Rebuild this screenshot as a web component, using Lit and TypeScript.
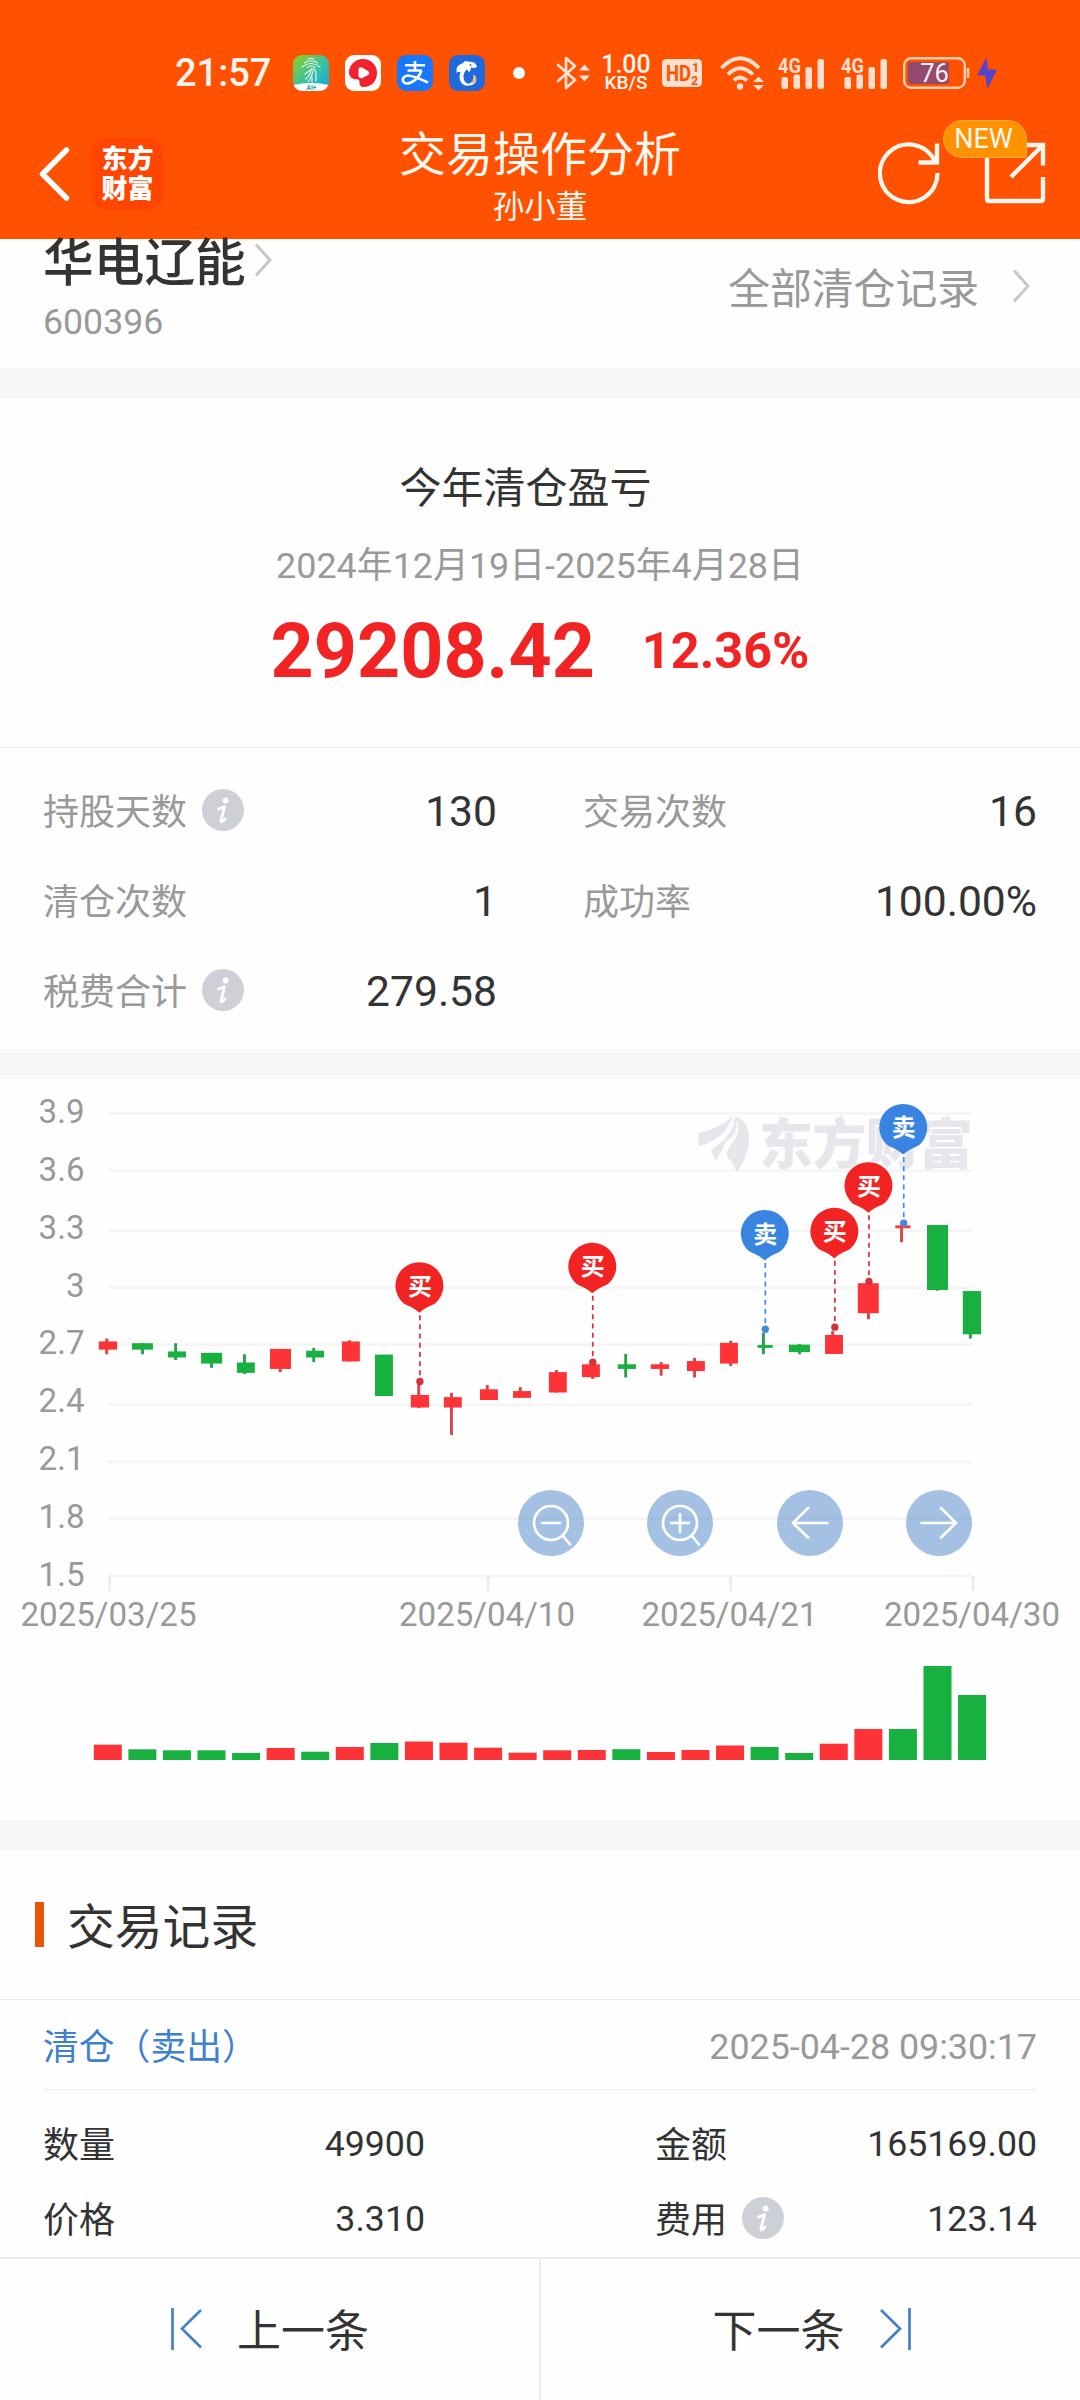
import { LitElement, html, svg, css } from "lit";
import { customElement, property } from "lit/decorators.js";

const FONT = css`
  font-family: Roboto, "Noto Sans CJK SC", sans-serif;
`;

/* ---------- status bar ---------- */

@customElement("status-bar")
class StatusBar extends LitElement {
  static styles = css`
    :host {
      display: flex;
      align-items: center;
      height: 110px;
      padding: 36px 0 0 175px;
      box-sizing: border-box;
      color: #fff4ec;
      ${FONT}
    }
    svg { display: block; flex: none; overflow: visible; }
    .time { width: 118px; font-size: 38px; line-height: 38px; font-weight: 500; flex: none; }
    .apps { display: flex; gap: 16px; }
    .app { width: 36px; height: 36px; }
    .dot { width: 12px; height: 12px; border-radius: 50%; background: #fff; margin-left: 28px; }
    .bt { margin-left: 31px; }
    .speed { width: 50px; margin-left: 10px; text-align: center; font-weight: 500; }
    .speed b { display: block; font-weight: 500; font-size: 25px; line-height: 20px; }
    .speed i { display: block; font-style: normal; font-size: 19px; line-height: 16px; }
    .hd { margin-left: 11px; }
    .wifi { margin-left: 18px; }
    .sig { margin-left: 14px; }
    .sig2 { margin-left: 17px; }
    .bat { margin-left: 16px; }
    .bolt { margin-left: 7px; }
  `;

  signal(cls: string) {
    return html`<svg class=${cls} width="46" height="34" viewBox="0 0 46 34" fill="#ffdfce">
      <text x="0" y="17" font-size="21" font-weight="700" textLength="23" lengthAdjust="spacingAndGlyphs">4G</text>
      <rect x="3.500" y="21" width="6.500" height="12" rx="2" />
      <rect x="15.500" y="18.500" width="6.500" height="14.500" rx="2" />
      <rect x="27.500" y="11" width="6.500" height="22" rx="2" />
      <rect x="39.500" y="3" width="6.500" height="30" rx="2" />
    </svg>`;
  }

  render() {
    return html`
      <span class="time">21:57</span>
      <div class="apps">
        <svg class="app" viewBox="0 0 36 36">
          <defs>
            <linearGradient id="g" x1="0" y1="0" x2="1" y2="1">
              <stop offset="0" stop-color="#8fd01c" /><stop offset=".5" stop-color="#3fc29a" /><stop offset="1" stop-color="#0aa8ef" />
            </linearGradient>
            <clipPath id="c"><rect width="36" height="36" rx="9" /></clipPath>
          </defs>
          <g clip-path="url(#c)">
            <rect width="36" height="36" fill="url(#g)" />
            <path d="M0 30Q18 26 36 30V36H0Z" fill="#fff" />
          </g>
          <g fill="none" stroke="#fff" stroke-width="1.100" stroke-linecap="round" opacity=".9">
            <path d="M15 4Q18 2.500 21 4M11.500 8Q18 3.500 24.500 8M9 12Q18 5 27 12M14 12.500Q18 9.500 22 12.500" />
            <path d="M12 19Q18 15 18 14M12.500 24Q18 20 18 14.500M15 27Q19 22 20 16M19 27V22M23 26V17Q22 13.500 18 14" />
          </g>
          <text x="18.500" y="35" font-size="6.500" font-weight="700" text-anchor="middle" fill="#1c9fae">AI+</text>
        </svg>
        <svg class="app" viewBox="0 0 36 36">
          <rect width="36" height="36" rx="9" fill="#fff" />
          <path d="M18 4A14 13.500 0 0 1 32 18C32 27 25 32 19 32C16 32 14 30 14.500 27C14.500 25.500 14 24.500 12 24.300C7 24.500 4 21.500 4 17.500A14 13.500 0 0 1 18 4Z" fill="#f5202e" />
          <path d="M13.500 14.500Q14 11.500 17 12.500L23 16Q25.500 18 23 20L17.500 23Q14 24 13.500 21Z" fill="#fff" />
        </svg>
        <svg class="app" viewBox="0 0 36 36">
          <rect width="36" height="36" rx="9" fill="#1677ff" />
          <g fill="none" stroke="#fff" stroke-width="2.600">
            <path d="M18 6V15M8 10.300H28M10.500 15.500H24.500" />
            <path d="M24.500 15.500Q22 23 15 27Q8 30.500 6 26Q5 21.500 11 20.500Q17 21 31 27.500" />
          </g>
        </svg>
        <svg class="app" viewBox="0 0 36 36">
          <rect width="36" height="36" rx="9" fill="#2069dd" />
          <path d="M7.500 18Q6.500 10 14 8L16 6Q18 6 20 6.800Q27 6.500 28 12Q25.500 13.500 22 12.500Q22 15.500 20 17.500Q19 14.500 17.500 14.500Q13 19.500 15 25Q17 29.500 22 29Q17 33 12.500 28Q9 23 11.500 17.500Q10 16 7.500 18Z" fill="#fff" />
          <path d="M24.500 19.500Q29.500 23 26 28Q22 32 16.500 29.800Q22.500 28.500 24 25Q25 22 24.500 19.500Z" fill="#fff" />
          <path d="M25.200 20.500Q28.500 24.500 22.500 28" fill="none" stroke="#f3a75b" stroke-width="2" />
          <circle cx="21.500" cy="10" r=".9" fill="#2069dd" />
        </svg>
      </div>
      <span class="dot"></span>
      <svg class="bt" width="35" height="36" viewBox="0 0 35 36" fill="none" stroke="#ffe3d4" stroke-width="2.700">
        <path d="M2 10L19 25L10 33V3L19 11L2 26" stroke-linejoin="round" stroke-linecap="round" />
        <path d="M23 15.500L28.500 9.500L34 15.500ZM23 20.500L28.500 26.500L34 20.500Z" fill="#ffe3d4" stroke="none" />
      </svg>
      <span class="speed"><b>1.00</b><i>KB/S</i></span>
      <svg class="hd" width="40" height="30" viewBox="0 0 40 30">
        <rect y="1" width="40" height="28" rx="4.500" fill="#ffdfce" />
        <g fill="#ff5100" font-weight="700">
          <text x="4" y="23" font-size="22" textLength="25" lengthAdjust="spacingAndGlyphs">HD</text>
          <text x="30" y="14" font-size="12.500">1</text>
          <text x="29" y="26.500" font-size="12.500">2</text>
        </g>
      </svg>
      <svg class="wifi" width="44" height="36" viewBox="0 0 44 36" fill="none" stroke="#ffdfce" stroke-width="3.800">
        <path d="M1.500 13Q20 -6.500 39 13M8 19.500Q20 7 33 19.500M14 25.500Q20 19.500 27 25.500" />
        <circle cx="20" cy="31.500" r="3.200" fill="#ffdfce" stroke="none" />
        <path d="M33 27L38.500 21.500L44 27ZM33 30L38.500 35.500L44 30Z" fill="#ffdfce" stroke="none" />
      </svg>
      ${this.signal("sig")} ${this.signal("sig2")}
      <svg class="bat" width="67" height="32" viewBox="0 0 67 32">
        <rect x="1.200" y="1.200" width="60.600" height="29.600" rx="7" fill="none" stroke="#ffcfae" stroke-width="2.400" />
        <rect x="5" y="5" width="41" height="22" rx="3" fill="#94496f" />
        <path d="M65 11V21" stroke="#ffcfae" stroke-width="2.600" />
        <text x="31.500" y="25" font-size="25.500" text-anchor="middle" fill="#fff0e8">76</text>
      </svg>
      <svg class="bolt" width="20" height="32" viewBox="0 0 20 32"><path d="M9.500 0L0 18.500H8L10.500 32L20 12.500H11Z" fill="#5544cc" /></svg>
    `;
  }
}

/* ---------- navigation ---------- */

@customElement("nav-bar")
class NavBar extends LitElement {
  static styles = css`
    :host {
      display: grid;
      grid-template-columns: 1fr auto 1fr;
      height: 129px;
      color: #fff8f0;
      ${FONT}
    }
    svg { display: block; }
    .left { display: flex; align-items: center; padding-left: 36px; padding-bottom: 2px; }
    .brand {
      width: 71px; height: 72px; margin-left: 20px; border-radius: 15px; background: #ff4500;
      display: flex; flex-direction: column; align-items: center; justify-content: center;
      font-size: 26px; line-height: 30px; font-weight: 900; color: #fff;
      box-sizing: border-box;
    }
    .mid { display: flex; flex-direction: column; align-items: center; padding-top: 17px; gap: 7px; }
    .title { font-size: 47px; line-height: 56px; }
    .sub { font-size: 31.500px; line-height: 36px; }
    .right { display: flex; align-items: flex-start; justify-content: flex-end; padding: 31px 34px 0 0; gap: 43px; }
    .share { position: relative; }
    .new {
      position: absolute; left: -41px; top: -21px; width: 84px; height: 38px; box-sizing: border-box;
      border: 1.500px solid #ffa83c; border-radius: 19px 19px 2px 19px; background: #ff9200;
      font-size: 27px; line-height: 37px; padding-right: 3px; text-align: center;
    }
  `;
  render() {
    return html`
      <div class="left">
        <svg width="36" height="58" viewBox="0 0 36 58"><path d="M30.500 5L6.500 29L30.500 53" fill="none" stroke="#fff" stroke-width="5.500" stroke-linecap="round" stroke-linejoin="round" /></svg>
        <div class="brand"><span>东方</span><span>财富</span></div>
      </div>
      <div class="mid"><div class="title">交易操作分析</div><div class="sub">孙小董</div></div>
      <div class="right">
        <svg width="63" height="64" viewBox="0 0 63 64" fill="none" stroke="#fff6ee" stroke-width="4.400">
          <path d="M59.500 32A28.800 28.800 0 1 1 57 20.500M59 2.500V21.500H40.500" />
        </svg>
        <div class="share">
          <svg width="62" height="64" viewBox="0 0 62 64" fill="none" stroke="#fff6ee" stroke-width="4.400">
            <path d="M3 4V58Q3 60 5 60H57Q59 60 59 58V36M40 4H59V24.500M59 4L27 36" />
          </svg>
          <span class="new">NEW</span>
        </div>
      </div>
    `;
  }
}

/* ---------- info badge ---------- */

@customElement("info-dot")
class InfoDot extends LitElement {
  static styles = css`
    :host { display: block; width: 42px; height: 42px; }
    svg { display: block; }
  `;
  render() {
    return html`<svg width="42" height="42" viewBox="0 0 42 42">
      <circle cx="21" cy="21" r="21" fill="#cdd0d6" />
      <circle cx="23.600" cy="11.500" r="2.900" fill="#fff" />
      <path d="M16.500 20Q20.500 18.500 22.500 17.800L19 31.500Q18.800 33.800 20.500 32.500Q22 31.500 23 30" fill="none" stroke="#fff" stroke-width="2.800" stroke-linecap="round" stroke-linejoin="round" />
    </svg>`;
  }
}

/* ---------- chart ---------- */

type Candle = [up: boolean, x1: number, x2: number, open: number, close: number, wick: number, high: number, low: number, volume: number];

/* Plot coordinates are in canvas units; KX and KY convert them to CSS pixels. */
const KX = 2.904;
const KY = 2.8;

const CANDLES: Candle[] = [
  [true, 287, 340, 732, 755, 310, 724, 768, 15.3],
  [false, 383, 444, 737, 755, 414, 737, 768, 10.7],
  [false, 488, 540, 760, 777, 510, 737, 784, 9.7],
  [false, 584, 645, 764, 794, 614, 764, 806, 9.7],
  [false, 688, 740, 791, 820, 710, 768, 823, 7],
  [true, 784, 845, 753, 809, 814, 753, 818, 12],
  [false, 889, 941, 758, 777, 911, 750, 790, 8.3],
  [true, 993, 1045, 732, 788, 1015, 729, 788, 13],
  [false, 1089, 1141, 769, 885, 1115, 769, 885, 17],
  [true, 1193, 1246, 882, 917, 1216, 850, 919, 18.5],
  [true, 1289, 1341, 888, 917, 1311, 876, 994, 17.3],
  [true, 1394, 1446, 866, 896, 1415, 854, 896, 12.3],
  [true, 1490, 1542, 871, 890, 1511, 860, 890, 7.3],
  [true, 1594, 1646, 818, 875, 1616, 812, 875, 9.7],
  [true, 1690, 1742, 796, 832, 1721, 790, 837, 10],
  [false, 1794, 1847, 796, 809, 1817, 767, 833, 10.8],
  [true, 1890, 1943, 796, 809, 1920, 790, 828, 8],
  [true, 1995, 2047, 787, 815, 2017, 778, 833, 10],
  [true, 2091, 2143, 736, 794, 2122, 730, 801, 14.5],
  [false, 2200, 2244, 742, 750, 2217, 708, 768, 13],
  [false, 2291, 2352, 741, 762, 2322, 739, 768, 7],
  [true, 2396, 2448, 714, 767, 2418, 703, 767, 16.3],
  [true, 2491, 2552, 569, 653, 2522, 569, 670, 31],
  [true, 2600, 2644, 407, 415, 2618, 407, 454, 31],
  [false, 2692, 2753, 406, 588, 2722, 406, 590, 94],
  [false, 2796, 2849, 591, 712, 2818, 591, 724, 65],
];

const PINS: [buy: boolean, x: number, top: number][] = [
  [true, 1218, 510],
  [true, 1720, 456],
  [false, 2221, 364],
  [true, 2423, 358],
  [true, 2522, 230],
  [false, 2623, 67],
];

const GRID = [94, 254, 422, 581, 741, 909, 1068, 1228, 1388];
const PRICES = ["3.9", "3.6", "3.3", "3", "2.7", "2.4", "2.1", "1.8", "1.5"];
const DATES: [number, string][] = [[109.5, "2025/03/25"], [488, "2025/04/10"], [730.5, "2025/04/21"], [973, "2025/04/30"]];

@customElement("trade-chart")
class TradeChart extends LitElement {
  static styles = css`
    :host { display: block; height: 741px; }
    svg { display: block; ${FONT} }
    .axis { fill: #999; font-size: 33.100px; }
    .mark { fill: #fff; font-size: 24px; font-weight: 700; text-anchor: middle; }
    .water { fill: #e6e6ec; font-size: 54px; font-weight: 900; }
  `;

  button(x: number, icon: unknown) {
    return svg`<g transform="translate(${x} 443)">
      <circle r="33" fill="rgba(73,129,198,.5)" />
      <g fill="none" stroke="#fff" stroke-width="2.700" stroke-linecap="round" stroke-linejoin="round">${icon}</g>
    </g>`;
  }

  candle([up, x1, x2, a, b, w, hi, lo]: Candle) {
    const c = up ? "#fe3337" : "#18b03f";
    const wc = up ? "#d8454a" : "#2aa04c";
    return svg`
      <rect x=${w / KX - 1.45} y=${hi / KY} width="2.9" height=${(lo - hi) / KY} fill=${wc} />
      <rect x=${x1 / KX} y=${a / KY} width=${(x2 - x1) / KX} height=${(b - a) / KY} fill=${c} />`;
  }

  pin([buy, x, top]: [boolean, number, number]) {
    const c = buy ? "#f12323" : "#3884e0";
    const lc = buy ? "#d43438" : "#4a88d8";
    return svg`<g transform="translate(${x / KX} ${top / KY})">
      <path d="M0.500 53V116" stroke=${lc} stroke-width="1.700" stroke-dasharray="5 4.200" />
      <circle cx="0.500" cy="119.300" r="3.700" fill=${lc} />
      <path d="M0 50.500C-6 45 -10 44.500 -16 41A24 23.500 0 1 1 16 41C10 44.500 6 45 0 50.500Z" fill=${c} />
      <text class="mark" x="0.500" y="32.500">${buy ? "买" : "卖"}</text>
    </g>`;
  }

  render() {
    return html`<svg width="1080" height="741" viewBox="0 -1 1080 741">
      ${GRID.map((y) => svg`<rect x="108.500" y=${y / KY - 1.4} width="863.500" height="2.800" fill="#f5f5f5" />`)}
      ${PRICES.map((p, i) => svg`<text class="axis" x="84.500" y=${43 + i * 57.87} text-anchor="end">${p}</text>`)}
      ${DATES.map(([x, d]) => svg`
        <rect x=${x - 1.4} y="496" width="2.900" height="15" fill="#ededed" />
        <text class="axis" x=${x - 1} y="546" text-anchor="middle">${d}</text>`)}
      <g fill="#e6e6ec">
        <path d="M698 53Q717 50 733 36Q727 50 720 56Q711 63 699 66Z" />
        <path d="M734 36Q742 50 726 62L716 81L711 70Q722 63 728 55Q735 47 734 36Z" />
        <path d="M735 36Q750 42 749 60Q748 77 737 92L731 81Q722 75 733 62Q742 52 735 36Z" />
      </g>
      <text class="water" x="759" y="83.500" textLength="214">东方财富</text>
      ${CANDLES.map((c) => this.candle(c))} ${PINS.map((p) => this.pin(p))}
      ${this.button(551, svg`<circle r="17" /><path d="M-9 0H9M12 13L19 21.500" />`)}
      ${this.button(680, svg`<circle r="17" /><path d="M-9 0H9M0 -9V9M12 13L19 21.500" />`)}
      ${this.button(810, svg`<path d="M17.500 0H-17M-2 -15L-17 0L-2 14.500" />`)}
      ${this.button(939, svg`<path d="M-17.500 0H17M2 -15L17 0L2 14.500" />`)}
      ${CANDLES.map((c, i) => svg`<rect x=${93.8 + i * 34.57} y=${680 - c[8]} width="28" height=${c[8]} fill=${
        c[0] && i !== 23 ? "#fe3337" : "#18b03f"} />`)}
    </svg>`;
  }
}

/* ---------- label / value pair ---------- */

@customElement("stat-cell")
class StatCell extends LitElement {
  @property() label = "";
  @property() value = "";
  @property({ type: Boolean }) info = false;
  static styles = css`
    :host { display: flex; align-items: center; font-size: 36px; ${FONT} }
    .label { color: var(--label, #999); padding-bottom: 4px; }
    info-dot { margin-left: 15px; margin-top: -2px; }
    .value { margin-left: auto; color: #333; font-size: var(--value-size, 42.6px); }
  `;
  render() {
    return html`<span class="label">${this.label}</span>${this.info ? html`<info-dot></info-dot>` : ""}<span class="value">${this.value}</span>`;
  }
}

@customElement("app-root")
class AppRoot extends LitElement {
  static styles = css`
    :host {
      display: flex; flex-direction: column; width: 1080px; height: 2400px; overflow: hidden;
      background: #fefefe; color: #333; ${FONT}
    }
    svg { display: block; }
    .header { background: #ff5100; height: 239px; flex: none; }
    .band { height: 30px; background: #f7f7f7; flex: none; }
    .stock { height: 129px; flex: none; display: flex; justify-content: space-between; padding: 0 50px 0 43px; box-sizing: border-box; }
    .name { display: flex; align-items: flex-start; font-size: 50.700px; line-height: 50px; font-weight: 500; }
    .name svg { margin: 4px 0 0 8px; }
    .code { font-size: 35.700px; line-height: 40px; color: #999; margin-top: 13px; }
    .all { display: flex; align-items: center; height: 94px; font-size: 41.800px; color: #999; gap: 33px; }
    .profit { height: 350px; flex: none; border-bottom: 1.500px solid #ebebeb; display: flex; flex-direction: column; align-items: center; box-sizing: border-box; }
    .ptitle { font-size: 42px; line-height: 50px; margin: 66px 29px 0 0; }
    .range { font-size: 35.900px; line-height: 40px; color: #999; margin-top: 32px; }
    .gain { display: flex; align-items: center; height: 80px; margin-top: 25px; gap: 47px; color: #f12323; font-weight: 700; }
    .big { font-size: 75.300px; line-height: 80px; }
    .pct { font-size: 50.400px; line-height: 56px; }
    .stats { height: 301px; flex: none; display: grid; grid-template-columns: 1fr 1fr; grid-auto-rows: 90px; column-gap: 86px; padding: 18px 43px 0; box-sizing: border-box; }
    .head { height: 150px; flex: none; display: flex; align-items: center; gap: 23px; padding-left: 35px; border-bottom: 1.500px solid #ebebeb; box-sizing: border-box; font-size: 47.800px; }
    .head i { width: 9px; height: 45px; background: #e95504; }
    .head span { padding-bottom: 3px; }
    .record { flex: none; height: 257px; padding: 0 43px; box-sizing: border-box; }
    .when { height: 90px; display: flex; align-items: center; justify-content: space-between; font-size: 35.800px; border-bottom: 1.500px solid #ebebeb; box-sizing: border-box; color: #999; padding-top: 4px; }
    .when b { font-weight: 400; color: #3f80cf; padding-bottom: 5px; }
    .rows { display: grid; grid-template-columns: 382px 382px; justify-content: space-between; grid-auto-rows: 75px; padding-top: 16px; --label: #333; --value-size: 35.7px; }
    .foot { flex: 1; display: grid; grid-template-columns: 539px 1fr; border-top: 2.500px solid #ececec; font-size: 44px; background: #fefefe; }
    .step { display: flex; align-items: center; justify-content: center; gap: 34px; padding-bottom: 2px; }
    .step span { padding-bottom: 2px; }
    .step + .step { border-left: 2.500px solid #ececec; padding-left: 3px; }
  `;

  chevron() {
    return html`<svg width="18" height="34" viewBox="0 0 18 34"><path d="M2 1.500L16 17L2 32.500" fill="none" stroke="#c8c8c8" stroke-width="3" /></svg>`;
  }

  render() {
    return html`
      <header class="header"><status-bar></status-bar><nav-bar></nav-bar></header>
      <section class="stock">
        <div>
          <div class="name">华电辽能${this.chevron()}</div>
          <div class="code">600396</div>
        </div>
        <div class="all"><span>全部清仓记录</span>${this.chevron()}</div>
      </section>
      <div class="band"></div>
      <section class="profit">
        <div class="ptitle">今年清仓盈亏</div>
        <div class="range">2024年12月19日-2025年4月28日</div>
        <div class="gain"><span class="big">29208.42</span><span class="pct">12.36%</span></div>
      </section>
      <section class="stats">
        <stat-cell label="持股天数" value="130" info></stat-cell>
        <stat-cell label="交易次数" value="16"></stat-cell>
        <stat-cell label="清仓次数" value="1"></stat-cell>
        <stat-cell label="成功率" value="100.00%"></stat-cell>
        <stat-cell label="税费合计" value="279.58" info></stat-cell>
      </section>
      <div class="band"></div>
      <trade-chart></trade-chart>
      <div class="band"></div>
      <section class="head"><i></i><span>交易记录</span></section>
      <section class="record">
        <div class="when"><b>清仓（卖出）</b><span>2025-04-28 09:30:17</span></div>
        <div class="rows">
          <stat-cell label="数量" value="49900"></stat-cell>
          <stat-cell label="金额" value="165169.00"></stat-cell>
          <stat-cell label="价格" value="3.310"></stat-cell>
          <stat-cell label="费用" value="123.14" info></stat-cell>
        </div>
      </section>
      <footer class="foot">
        <div class="step">
          <svg width="33" height="42" viewBox="0 0 33 42" fill="none" stroke="#4580c8" stroke-width="2.700"><path d="M2.500 0V42M31 2L12 20.700L31 39.500" /></svg>
          <span>上一条</span>
        </div>
        <div class="step">
          <span>下一条</span>
          <svg width="33" height="42" viewBox="0 0 33 42" fill="none" stroke="#4580c8" stroke-width="2.700"><path d="M30.500 0V42M2 2L21 20.700L2 39.500" /></svg>
        </div>
      </footer>
    `;
  }
}
